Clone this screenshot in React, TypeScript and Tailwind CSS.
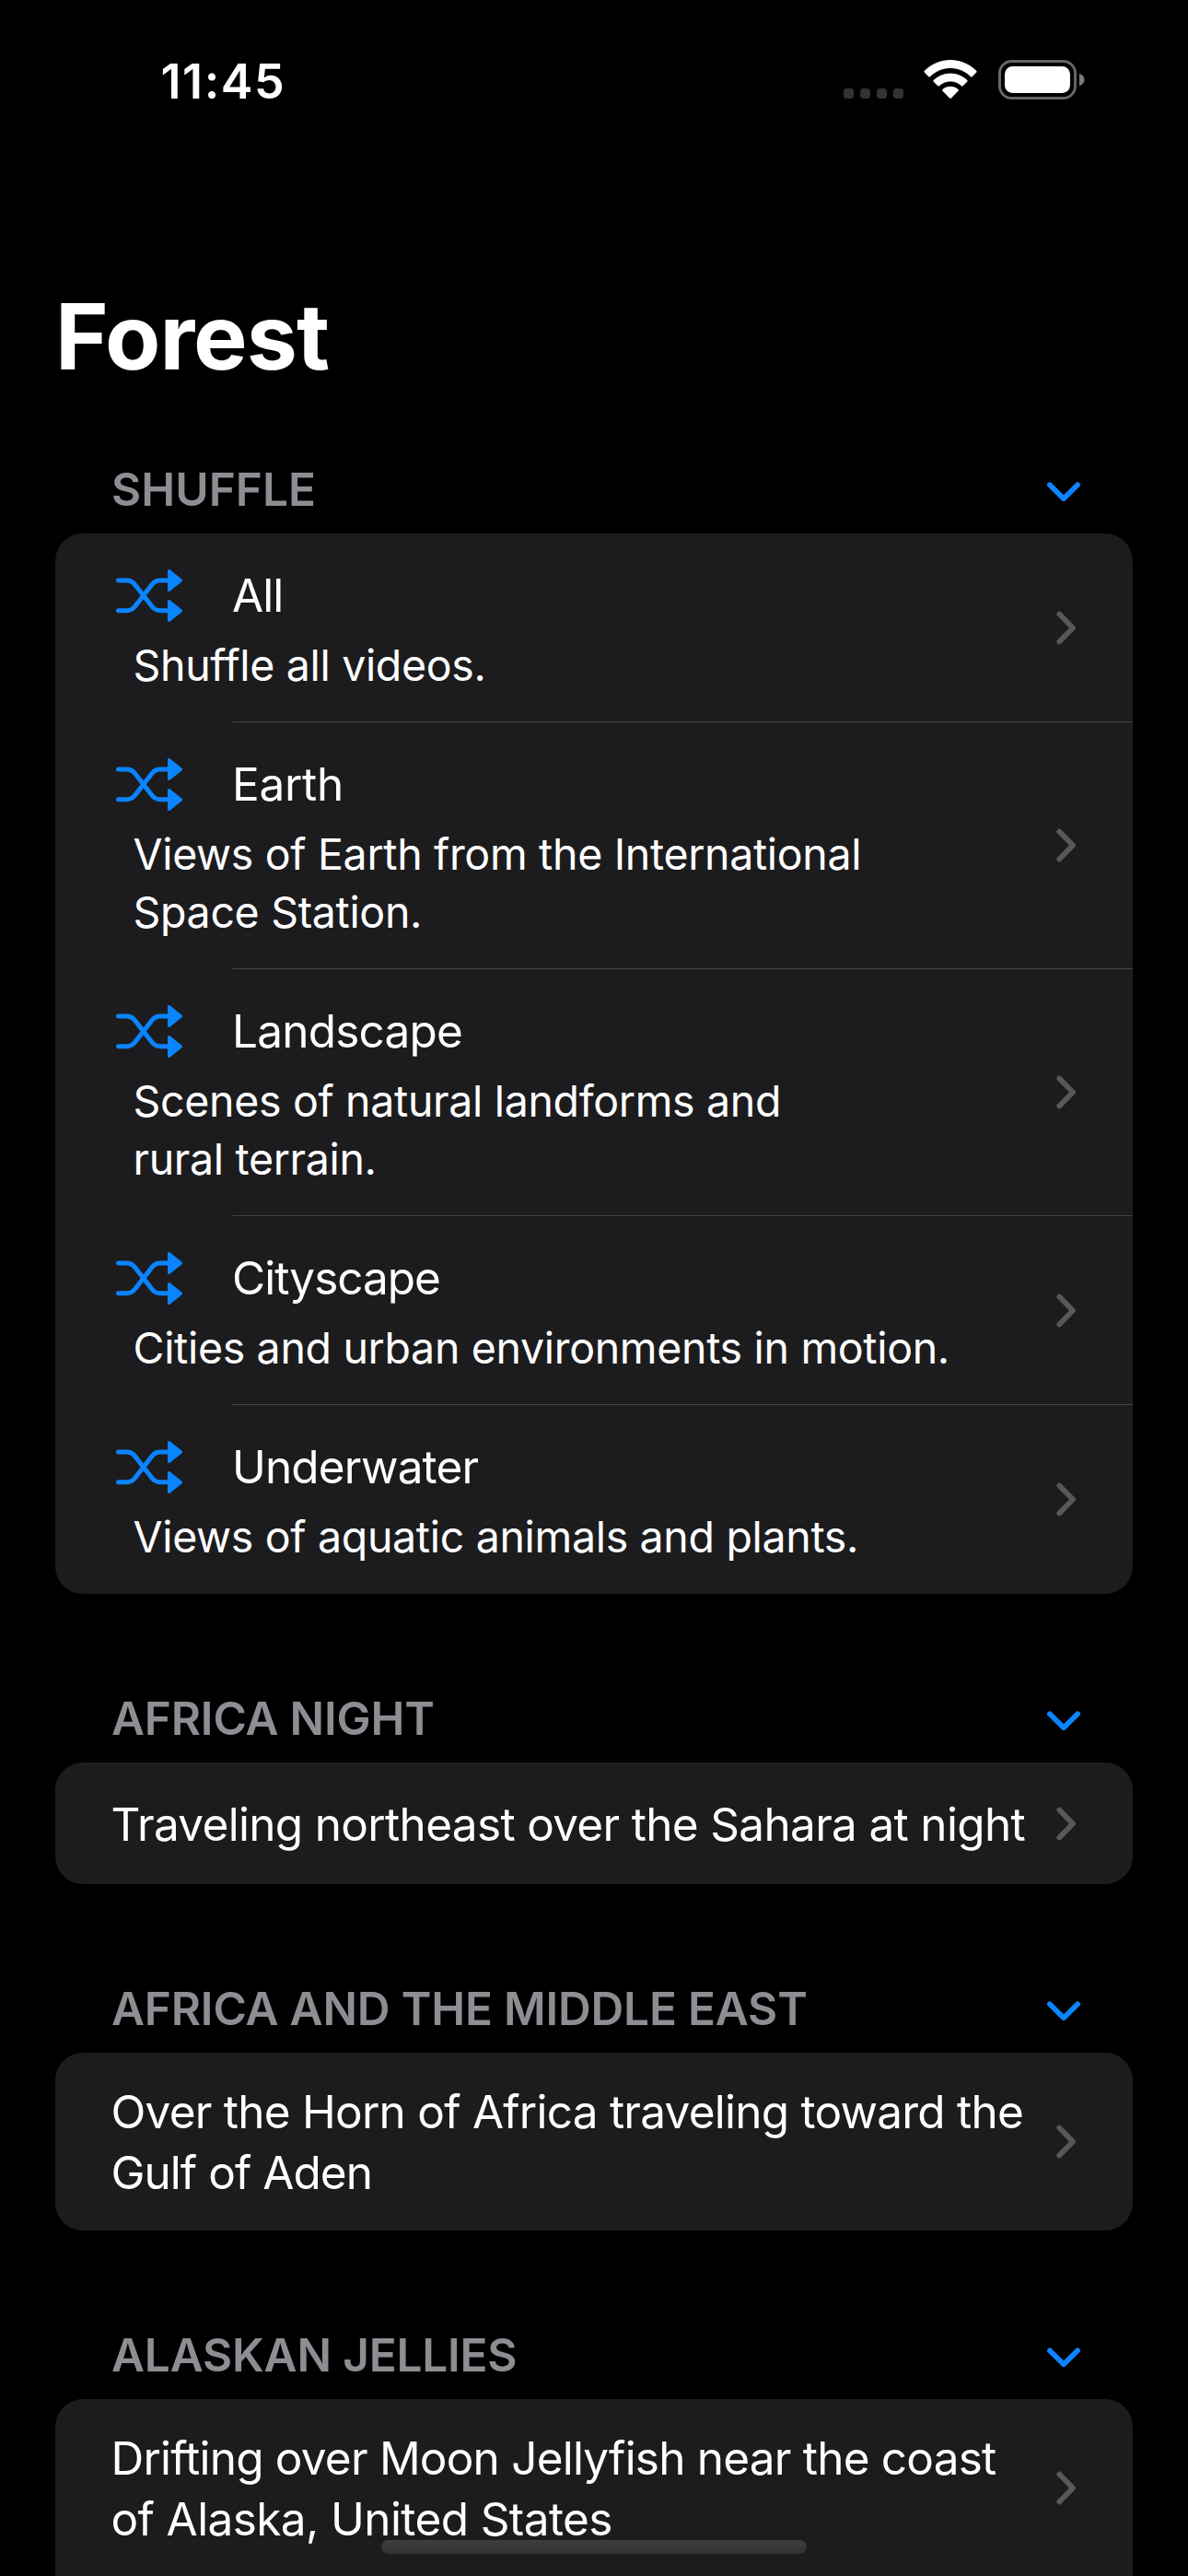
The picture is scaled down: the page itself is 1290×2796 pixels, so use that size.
import React from 'react';

type ShuffleItem = {
  title: string;
  tracking: string;
  lines: string[];
};

type Section = {
  title: string;
  padding: string;
  lines: { text: string; tracking: string }[];
};

const shuffleItems: ShuffleItem[] = [
  { title: 'All', tracking: 'tracking-[-1px]', lines: ['Shuffle all videos.'] },
  {
    title: 'Earth',
    tracking: 'tracking-[-0.3px]',
    lines: ['Views of Earth from the International', 'Space Station.'],
  },
  {
    title: 'Landscape',
    tracking: 'tracking-[-0.8px]',
    lines: ['Scenes of natural landforms and', 'rural terrain.'],
  },
  {
    title: 'Cityscape',
    tracking: 'tracking-[-1px]',
    lines: ['Cities and urban environments in motion.'],
  },
  {
    title: 'Underwater',
    tracking: 'tracking-[-0.86px]',
    lines: ['Views of aquatic animals and plants.'],
  },
];

const sections: Section[] = [
  {
    title: 'AFRICA NIGHT',
    padding: 'pt-[34px] pb-[32px]',
    lines: [
      { text: 'Traveling northeast over the Sahara at night', tracking: 'tracking-[-0.68px]' },
    ],
  },
  {
    title: 'AFRICA AND THE MIDDLE EAST',
    padding: 'pt-[31px] pb-[30px]',
    lines: [
      { text: 'Over the Horn of Africa traveling toward the', tracking: 'tracking-[-0.76px]' },
      { text: 'Gulf of Aden', tracking: 'tracking-[-0.95px]' },
    ],
  },
  {
    title: 'ALASKAN JELLIES',
    padding: 'pt-[31px] pb-[63px]',
    lines: [
      { text: 'Drifting over Moon Jellyfish near the coast', tracking: 'tracking-[-0.79px]' },
      { text: 'of Alaska, United States', tracking: 'tracking-[-0.6px]' },
    ],
  },
];

function WifiIcon() {
  return (
    <svg width="58" height="43" viewBox="0 0 58 43" fill="#fff" stroke="#fff" strokeWidth="1" strokeLinejoin="round">
      <path d="M29 .6C18.2 .6 8.3 4.9 1 12.2c-.3.4-.3.8 0 1.1l4.6 4.7c.3.3.7.3 1 0C12.5 12.2 20.3 8.5 29 8.5s16.5 3.7 22.4 9.5c.3.3.7.3 1 0l4.6-4.7c.3-.3.3-.7 0-1.1C49.7 4.9 39.8 .6 29 .6z" />
      <path d="M29 15.1c-6.9 0-13.2 2.7-18 7.2-.4.4-.4.7 0 1.1l4.6 4.6c.3.3.7.3 1 0C19.9 24.9 24.2 22.9 29 22.9s9.1 2 12.4 5.1c.3.3.7.3 1 0l4.6-4.6c.4-.4.4-.7 0-1.1-4.8-4.5-11.1-7.2-18-7.2z" />
      <path d="M29 29.3c-3.2 0-6 1.1-8.2 3-.4.4-.4.8 0 1.2L28.5 41.3c.3.3.7.3 1 0L37.2 33.5c.4-.4.4-.8 0-1.2-2.2-1.9-5-3-8.2-3z" />
    </svg>
  );
}

function BatteryIcon() {
  return (
    <svg width="95" height="43" viewBox="0 0 95 43">
      <rect x="1.5" y="1.5" width="82" height="40" rx="13" fill="none" stroke="#666" strokeWidth="3" />
      <rect x="7" y="7" width="71" height="29" rx="8.5" fill="#fff" />
      <path d="M88 15c3.6 1 5.5 3.5 5.5 6.5S91.6 27 88 28.2z" fill="#7a7a7a" />
    </svg>
  );
}

function ShuffleIcon() {
  return (
    <svg width="72" height="57" viewBox="0 0 72 57" className="shrink-0 text-[#0a84ff]">
      <g fill="none" stroke="currentColor" strokeWidth="5" strokeLinecap="round">
        <path d="M2.5 12H11.5c4 0 6.5 1.3 9 4.5L39 40.2c2.5 3.2 5 4.5 9 4.5H57" />
        <path d="M2.5 44.7H11.5c4 0 6.5-1.3 9-4.5L39 16.5c2.5-3.2 5-4.5 9-4.5H57" />
      </g>
      <g fill="currentColor" stroke="currentColor" strokeWidth="3" strokeLinejoin="round">
        <path d="M57.5 1.5v21L70.5 12z" />
        <path d="M57.5 34.5v21L70.5 45z" />
      </g>
    </svg>
  );
}

function ChevronRight() {
  return (
    <svg width="22" height="37" viewBox="0 0 22 37" className="shrink-0">
      <path d="M3.3 3.5L18 18.5L3.3 33.5" fill="none" stroke="#58585a" strokeWidth="5.8" strokeLinecap="round" strokeLinejoin="round" />
    </svg>
  );
}

function ChevronDown() {
  return (
    <svg width="36" height="22" viewBox="0 0 36 22" className="mt-[5px] shrink-0">
      <path d="M2.9 3.2L18 18.3L33.1 3.2" fill="none" stroke="#0a84ff" strokeWidth="5.7" strokeLinecap="round" strokeLinejoin="round" />
    </svg>
  );
}

function SectionHeader({ title, tracking }: { title: string; tracking: string }) {
  return (
    <div className="flex h-[81px] items-center justify-between pr-[57px] pb-[15px] pl-[61px]">
      <h2 className={`text-[49.5px] leading-[66px] font-[560] whitespace-nowrap text-[#8e8d93] ${tracking}`}>{title}</h2>
      <ChevronDown />
    </div>
  );
}

function StatusBar() {
  return (
    <div className="flex items-start justify-between pt-[58px] pr-[111px] pl-[174.5px]">
      <span className="pt-px text-[52px] leading-[59px] font-semibold tracking-[1.6px]">11:45</span>
      <div className="flex pt-[7px]">
        <div className="mt-[31px] flex gap-[7px]">
          {[0, 1, 2, 3].map((dot) => (
            <span key={dot} className="size-[11px] rounded-[3.5px] bg-[#333]" />
          ))}
        </div>
        <div className="ml-[22px] flex gap-[23px]">
          <WifiIcon />
          <BatteryIcon />
        </div>
      </div>
    </div>
  );
}

export default function App() {
  return (
    <div className="relative flex h-[2796px] w-[1290px] flex-col overflow-hidden bg-black font-['Inter',sans-serif] text-white">
      <StatusBar />
      <main className="flex flex-col px-[60px] pt-[188px]">
        <h1 className="text-[98.5px] leading-[120px] font-bold tracking-[-1px]">Forest</h1>

        <section className="pt-[72px]">
          <SectionHeader title="SHUFFLE" tracking="tracking-[0.06px]" />
          <ul className="rounded-[30px] bg-[#1c1c1e]">
            {shuffleItems.map((item, i) => (
              <li key={item.title}>
                <div className="flex items-center justify-between pr-[61px]">
                  <div className={i < shuffleItems.length - 1 ? 'pt-[34px] pb-[29px]' : 'pt-[34px] pb-[30px]'}>
                    <div className="flex items-center gap-[54px] pl-[66px]">
                      <ShuffleIcon />
                      <span className={`text-[49.5px] leading-[66px] ${item.tracking}`}>{item.title}</span>
                    </div>
                    <p className="mt-3 pl-[84.5px] text-[46.5px] leading-[63px] tracking-[-0.33px] whitespace-nowrap">
                      {item.lines.map((line) => (
                        <span key={line} className="block">
                          {line}
                        </span>
                      ))}
                    </p>
                  </div>
                  <ChevronRight />
                </div>
                {i < shuffleItems.length - 1 && <div className="ml-[192px] h-px bg-[#434346]" />}
              </li>
            ))}
          </ul>
        </section>

        {sections.map((section) => (
          <section key={section.title} className="pt-[102px]">
            <SectionHeader title={section.title} tracking="tracking-[-0.18px]" />
            <div className="relative rounded-[30px] bg-[#1c1c1e] pr-[61px] pl-[60.5px]">
              <p className={`text-[49.5px] leading-[66px] whitespace-nowrap ${section.padding}`}>
                {section.lines.map((line) => (
                  <span key={line.text} className={`block ${line.tracking}`}>
                    {line.text}
                  </span>
                ))}
              </p>
              <div
                className={`absolute top-0 right-[61px] flex items-center ${
                  section.lines.length > 1 ? 'h-[193px]' : 'h-[132px]'
                }`}
              >
                <ChevronRight />
              </div>
            </div>
          </section>
        ))}
      </main>
      <div className="absolute inset-x-0 bottom-[24px] flex justify-center">
        <div className="h-[15px] w-[462px] rounded-full bg-linear-to-b from-[#3e3e3e] to-[#333]" />
      </div>
    </div>
  );
}
